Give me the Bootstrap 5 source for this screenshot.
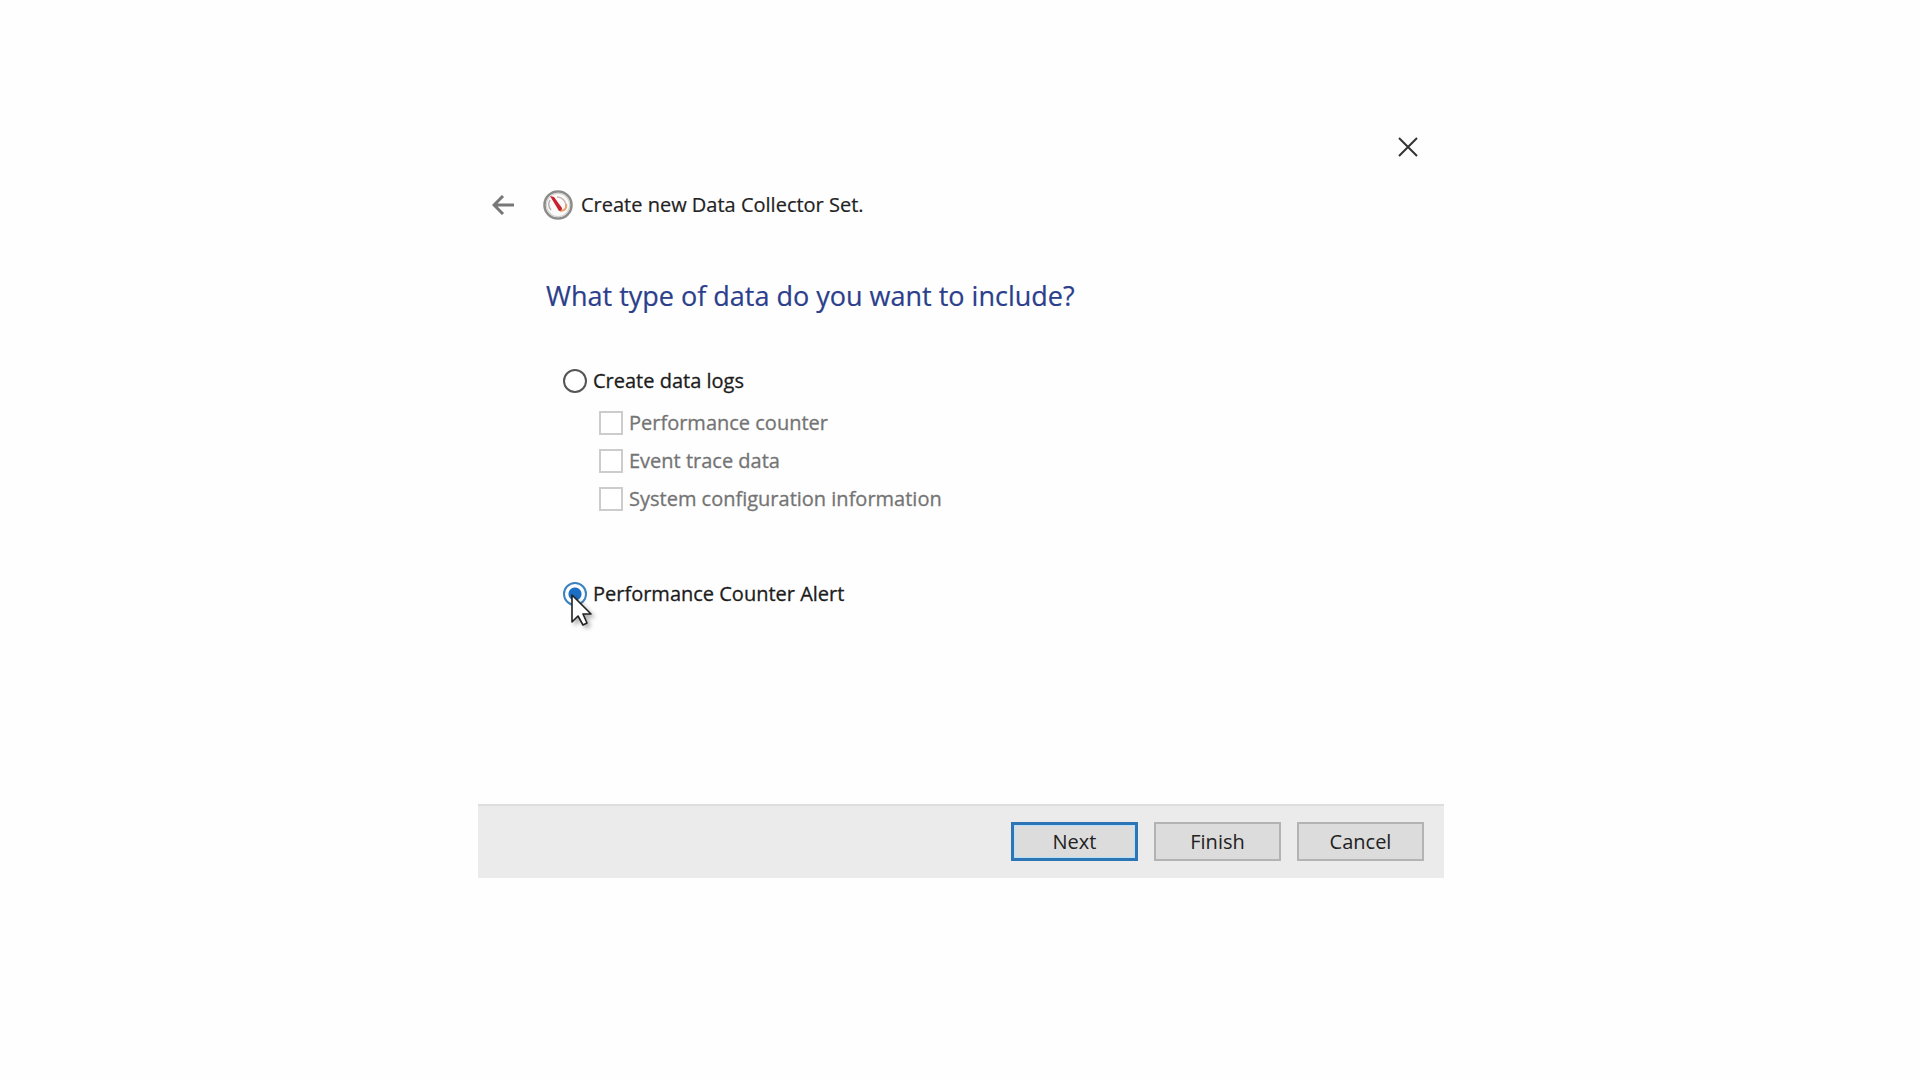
<!DOCTYPE html>
<html lang="en">
<head>
<meta charset="utf-8">
<meta name="viewport" content="width=device-width, initial-scale=1">
<title>Create new Data Collector Set</title>
<link rel="stylesheet" href="https://cdn.jsdelivr.net/npm/bootstrap@5.3.0/dist/css/bootstrap.min.css">
<style>
  body { background: #fefefe; color: #222; font-family: "Open Sans", "Noto Sans", sans-serif; font-size: 20px; line-height: 24px; padding-left: 2px; }
  .wizard { width: 100%; max-width: 966px; }
  .icon-btn { line-height: 0; padding: 0; border: 0; background: none; }
  .titlebar { padding: 17px 26px 0; }
  .wizard-head { padding: 33px 14px 0; -webkit-text-stroke: .2px; }
  .wizard-head .gauge { margin-left: 28px; margin-right: 8px; }
  .wizard-body { padding: 58px 68px 198px; }
  .question { color: #2b3f8c; font-size: 27px; line-height: 36px; margin: 0; font-weight: 400; -webkit-text-stroke: .2px; }
  .choices { padding: 55px 17px 0; }
  .choice { display: flex; align-items: center; gap: 6px; position: relative; }
  .choice .form-check-input { width: 24px; height: 24px; margin: 0; background-color: #fff; flex: none; opacity: 1; box-shadow: none; }
  .choice .form-check-input[type=radio] { border: 2px solid #555; }
  .choice .form-check-input[type=radio]:checked { border-color: #3c82bf; background-image: radial-gradient(circle, #1c6fc4 6px, #fff 7px); background-size: 100% 100%; }
  .choice .form-check-input[type=checkbox] { border: 2px solid #ccc; border-radius: 0; }
  .choice label { color: #1c1c1c; -webkit-text-stroke: .3px; }
  .sub-choices { padding: 18px 36px 71px; display: grid; gap: 14px; }
  .sub-choices .choice .form-check-input:disabled ~ label { color: #747474; opacity: 1; }
  .pointer { position: absolute; left: 8px; top: 11px; filter: drop-shadow(3px 3px 2px rgba(0,0,0,.3)); }
  .wizard-foot { background: #ebebeb; border-top: 2px solid #dedede; padding: 16px 20px 17px; gap: 16px; }
  .wizard-foot .btn { width: 127px; height: 39px; padding: 0; border: 2px solid #b3b3b3; border-radius: 0; background: #dcdcdc; color: #222; font-size: 20px; line-height: 30px; }
  .wizard-foot .btn.default-btn { border: 3px solid #2e75b6; box-shadow: inset 0 0 0 1px #b4e2fb; }
</style>
<script src="https://cdn.jsdelivr.net/npm/bootstrap@5.3.0/dist/js/bootstrap.bundle.min.js"></script>
</head>
<body class="min-vh-100 d-flex flex-column align-items-center">
<main class="wizard mt-5 pt-4">
  <div class="pt-5">
    <div class="titlebar d-flex justify-content-end">
      <button type="button" class="icon-btn" aria-label="Close">
        <svg width="20" height="20" viewBox="0 0 20 20" fill="none" stroke="#333" stroke-width="2"><path d="M1 1l18 18M19 1L1 19"/></svg>
      </button>
    </div>
    <header class="wizard-head d-flex align-items-center">
      <button type="button" class="icon-btn" aria-label="Back">
        <svg width="23" height="20" viewBox="0 0 23 20" fill="none" stroke="#777" stroke-width="3"><path d="M22 10H3M11 1L2 10l9 9"/></svg>
      </button>
      <svg class="gauge" width="30" height="30" viewBox="0 0 30 30" aria-hidden="true">
        <circle cx="15" cy="15" r="13.5" fill="#fbfaf9" stroke="#8c8c8a" stroke-width="2.6"/>
        <circle cx="15" cy="15" r="11.6" fill="none" stroke="#d5d3d1" stroke-width="1.2"/>
        <path d="M8 20a9 9 0 0 1-1-10" fill="none" stroke="#b9b3b0" stroke-width="1.5"/>
        <path d="M14 7a9 9 0 0 1 9 9" fill="none" stroke="#c9b9b4" stroke-width="1.5"/>
        <path d="M23 14q1 4-2 6l-4 1" fill="none" stroke="#e7a16f" stroke-width="2"/>
        <path d="M7 6l4 1 8 11q0 3-3 3z" fill="#c9202f"/>
      </svg>
      <span>Create new Data Collector Set.</span>
    </header>
    <form id="wizardForm" class="wizard-body">
      <h1 class="question">What type of data do you want to include?</h1>
      <div class="choices">
        <div class="choice">
          <input class="form-check-input" type="radio" name="kind" id="logs">
          <label for="logs">Create data logs</label>
        </div>
        <div class="sub-choices">
          <div class="choice">
            <input class="form-check-input" type="checkbox" id="perf" disabled>
            <label for="perf">Performance counter</label>
          </div>
          <div class="choice">
            <input class="form-check-input" type="checkbox" id="trace" disabled>
            <label for="trace">Event trace data</label>
          </div>
          <div class="choice">
            <input class="form-check-input" type="checkbox" id="sysinfo" disabled>
            <label for="sysinfo">System configuration information</label>
          </div>
        </div>
        <div class="choice">
          <input class="form-check-input" type="radio" name="kind" id="alert" checked>
          <label for="alert">Performance Counter Alert</label>
          <svg class="pointer" width="22" height="34" viewBox="0 0 22 34" aria-hidden="true"><path d="M1 2v27l6-6 5 9 4-2-4-9h8z" fill="#fff" stroke="#222" stroke-width="1.6" stroke-linejoin="round"/></svg>
        </div>
      </div>
    </form>
    <footer class="wizard-foot d-flex justify-content-end">
      <button type="submit" form="wizardForm" class="btn default-btn">Next</button>
      <button type="button" class="btn">Finish</button>
      <button type="button" class="btn">Cancel</button>
    </footer>
  </div>
</main>
</body>
</html>
